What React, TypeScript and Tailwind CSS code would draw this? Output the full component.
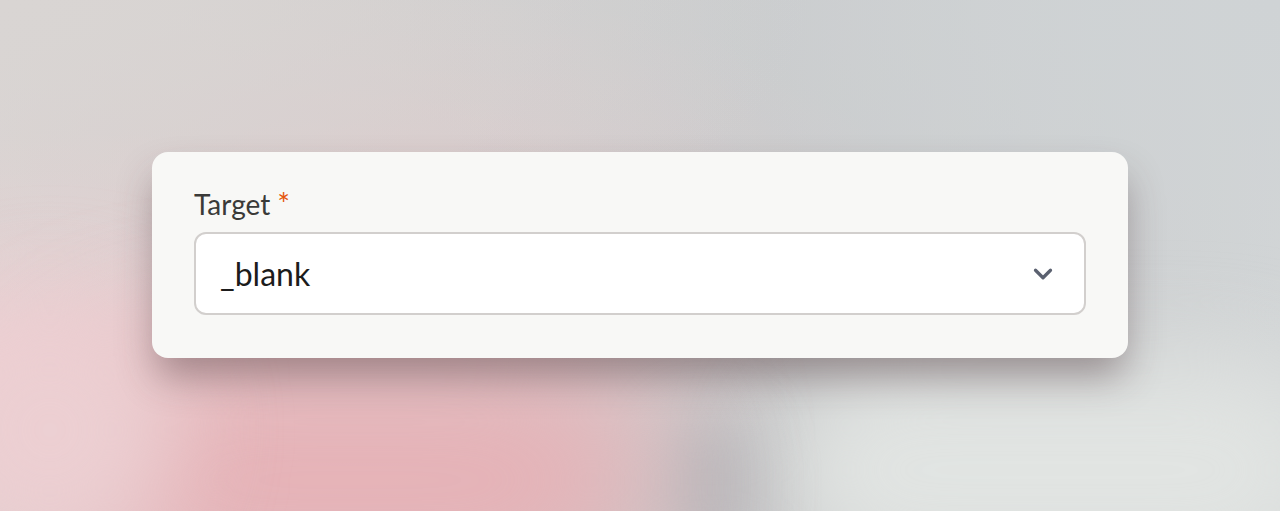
import { ChevronDown } from "lucide-react";

export default function App() {
  return (
    <div className="relative w-[1280px] h-[511px] overflow-hidden bg-[#cfd0d0] font-['Lato','Liberation_Sans',sans-serif]">
      {/* blurred backdrop */}
      <div className="absolute inset-0 bg-[radial-gradient(ellipse_at_0%_0%,#d9d5d3_0%,transparent_45%),radial-gradient(ellipse_at_100%_0%,#cfd3d5_0%,transparent_50%),radial-gradient(ellipse_at_0%_70%,#ecd0d3_0%,transparent_45%),radial-gradient(ellipse_at_30%_35%,#dccbcc_0%,transparent_40%),linear-gradient(90deg,#d9d4d3,#c8c9ca_60%,#d2d5d6)]" />
      <div className="absolute left-[780px] top-[360px] w-[560px] h-[220px] rounded-full bg-[#e1e4e2] blur-[50px]" />
      <div className="absolute left-[670px] top-[420px] w-[80px] h-[140px] rounded-full bg-[#b6b8bb] blur-[30px]" />
      <div className="absolute left-[60px] top-[360px] w-[600px] h-[240px] rounded-full bg-[#e6b1b6] blur-[70px]" />
      <div className="absolute left-[-80px] top-[300px] w-[260px] h-[260px] rounded-full bg-[#eccfd2] blur-[50px]" />

      <div className="relative flex justify-center pt-[152px]">
        <div className="w-[976px] h-[206px] rounded-2xl bg-[#f8f8f6] px-[42px] pt-[32px] shadow-[0_22px_38px_-4px_rgba(70,45,50,0.42)]">
          <div className="flex items-baseline gap-[7px] text-[28px] leading-[38px] text-[#3a3a38]">
            <span>Target</span>
            <span className="text-[#e5560c] text-[30px]">*</span>
          </div>
          <div className="mt-[9px] h-[83px] flex items-center justify-between rounded-xl border-2 border-[#d2cfcd] bg-white pl-[24px] pr-[26px]">
            <span className="text-[32px] text-[#1c1c1c]">_blank</span>
            <ChevronDown size={30} strokeWidth={2.6} className="text-[#5b6170]" />
          </div>
        </div>
      </div>
    </div>
  );
}
